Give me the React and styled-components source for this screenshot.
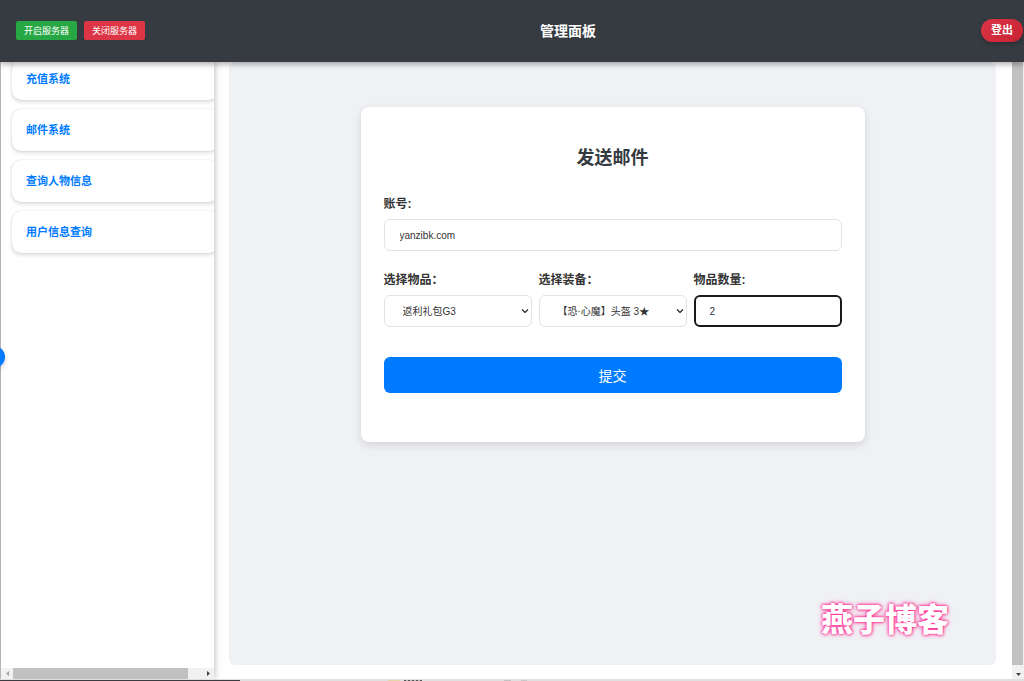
import React, { useState } from "react";
import styled, { createGlobalStyle } from "styled-components";

const GlobalStyle = createGlobalStyle`
  *, *::before, *::after { box-sizing: border-box; }
  body {
    margin: 0;
    background: #fff;
    color: #333;
    font-family: "Liberation Sans", "Noto Sans CJK SC", sans-serif;
  }
  button, input, select { font-family: inherit; }
`;

const Page = styled.div`
  position: relative;
  display: flex;
  flex-direction: column;
  min-height: 100vh;
  overflow: hidden;
`;

const Header = styled.header`
  position: relative;
  z-index: 2;
  display: flex;
  align-items: center;
  justify-content: space-between;
  height: 62px;
  padding: 0 1px 1px 16px;
  background: #363a41;
  box-shadow: 0 2px 6px rgba(0, 0, 0, 0.35);
`;

const ServerActions = styled.div`
  display: flex;
  gap: 7px;
  margin-right: 10px;
`;

const ServerButton = styled.button`
  height: 19px;
  padding: 0 8px;
  border: 0;
  border-radius: 2px;
  background: ${(p) => (p.$tone === "start" ? "#28a745" : "#dc3545")};
  color: #fff;
  font-size: 9px;
  line-height: 20px;
`;

const HeaderTitle = styled.h1`
  margin: 0;
  color: #fff;
  font-size: 14px;
  line-height: 20px;
`;

const LogoutButton = styled.button`
  height: 23px;
  padding: 0 10px;
  border: 0;
  border-radius: 12px;
  background: linear-gradient(135deg, #dc3545, #c82333);
  box-shadow: 0 2px 4px rgba(0, 0, 0, 0.2);
  color: #fff;
  font-size: 11px;
  font-weight: 700;
  line-height: 23px;
`;

const Body = styled.div`
  display: flex;
  flex: 1;
  overflow: hidden;
`;

const Sidebar = styled.aside`
  z-index: 1;
  display: flex;
  flex-direction: column;
  flex: none;
  justify-content: space-between;
  width: 214px;
  border-left: 1px solid #b4b4b4;
  background: #fff;
  box-shadow: 1px 0 6px rgba(0, 0, 0, 0.25);
  overflow: hidden;
`;

const Menu = styled.nav`
  display: flex;
  flex-direction: column;
  gap: 9px;
  margin-top: -4px;
  padding-left: 11px;
`;

const MenuLink = styled.a`
  flex: none;
  width: 206px;
  padding: 11px 14px;
  border-radius: 9px;
  background: #fff;
  box-shadow: 0 0 1px rgba(0, 0, 0, 0.25), 0 2px 4px rgba(0, 0, 0, 0.14);
  color: #007bff;
  font-size: 11px;
  font-weight: 700;
  line-height: 20px;
  text-decoration: none;
`;

const HorizontalBar = styled.div`
  display: flex;
  align-items: center;
  height: 11px;
  background: #f1f1f1;
`;

const HorizontalThumb = styled.div`
  width: 175px;
  height: 11px;
  background: #c1c1c1;
`;

const VerticalBar = styled.div`
  display: flex;
  flex-direction: column;
  flex: none;
  width: 12px;
  background: #f1f1f1;
`;

const VerticalThumb = styled.div`
  flex: 1;
  width: 11px;
  background: #c1c1c1;
`;

const ArrowBox = styled.span`
  display: flex;
  align-items: center;
  justify-content: center;
  width: 12px;
  height: ${(p) => p.$height}px;
  margin-left: ${(p) => (p.$end ? "auto" : "0")};
`;

const Main = styled.main`
  display: flex;
  flex: 1;
  min-width: 0;
  padding: 0 16px 14px 15px;
`;

const Panel = styled.section`
  flex: 1;
  padding: 45px 16px 16px;
  border-radius: 6px;
  background: #f0f1f5;
`;

const FormCard = styled.form`
  max-width: 504px;
  min-height: 335px;
  margin: 0 auto;
  padding: 36px 23px 49px;
  border-radius: 8px;
  background: #fff;
  box-shadow: 0 3px 8px rgba(0, 0, 0, 0.12);
`;

const FormTitle = styled.h2`
  margin: 0 0 22px;
  color: #343a40;
  font-size: 18px;
  line-height: 30px;
  text-align: center;
`;

const FieldRow = styled.div`
  display: flex;
  gap: 7px;
  margin-bottom: ${(p) => (p.$last ? "30px" : "20px")};
`;

const Field = styled.div`
  display: flex;
  flex: 1;
  flex-direction: column;
  gap: 6px;
  min-width: 0;
`;

const Label = styled.label`
  color: #333;
  font-size: 12px;
  font-weight: 700;
  line-height: 18px;
`;

const TextInput = styled.input`
  width: 100%;
  height: 32px;
  padding: 0 15px;
  border: 1px solid #e2e3e5;
  border-radius: 6px;
  background: #fff;
  color: #333;
  font-size: 10px;
  ${(p) => p.$active && "border: 2px solid #1a1a1e; padding: 0 14px;"}
`;

const SelectBox = styled.div`
  position: relative;

  svg {
    position: absolute;
    top: 13px;
    right: 3px;
    pointer-events: none;
  }
`;

const Select = styled.select`
  display: block;
  width: 100%;
  height: 32px;
  padding: 0 18px;
  appearance: none;
  border: 1px solid #e2e3e5;
  border-radius: 6px;
  background: #fff;
  color: #333;
  font-size: 10px;
`;

const SubmitButton = styled.button`
  width: 100%;
  height: 36px;
  border: 0;
  border-radius: 6px;
  background: #007bff;
  color: #fff;
  font-size: 14px;
  line-height: 36px;
`;

const BottomEdge = styled.div`
  height: 2px;
  border-top: 1px solid #e0e0e0;
  background:
    linear-gradient(#3c3c3e, #3c3c3e) 0 0 / 240px 1px no-repeat,
    linear-gradient(#e3d5a6, #e3d5a6) 388px 0 / 12px 1px no-repeat,
    repeating-linear-gradient(90deg, #555 0 2px, #bbb 2px 4px) 404px 0 / 18px 1px no-repeat,
    linear-gradient(#c2c2c2, #c2c2c2) 504px 0 / 7px 1px no-repeat,
    linear-gradient(#c8c8c8, #c8c8c8) 521px 0 / 6px 1px no-repeat,
    #e0e0e0;
`;

const DrawerToggle = styled.button`
  position: absolute;
  z-index: 3;
  top: 346px;
  left: -17px;
  width: 22px;
  height: 22px;
  padding: 0;
  border: 0;
  border-radius: 50%;
  background: #007bff;
  box-shadow: 0 2px 5px rgba(0, 0, 0, 0.2);
`;

const Watermark = styled.div`
  position: absolute;
  z-index: 3;
  right: 75px;
  bottom: 44px;
  color: #fff;
  font-family: "Noto Sans CJK SC", sans-serif;
  font-size: 32px;
  font-weight: 900;
  line-height: 40px;
  text-shadow: 0 0 2px #ff2f92, 0 0 3px #ff2f92, 0 0 5px #ff4fa3;
  pointer-events: none;
`;

const menuItems = ["充值系统", "邮件系统", "查询人物信息", "用户信息查询"];

function Arrow({ points, color }) {
  return (
    <svg width="7" height="7" viewBox="0 0 7 7" aria-hidden="true">
      <polygon points={points} fill={color} />
    </svg>
  );
}

function Dropdown({ id, value }) {
  return (
    <SelectBox>
      <Select id={id}>
        <option>{value}</option>
      </Select>
      <svg width="8" height="6" viewBox="0 0 8 6" aria-hidden="true">
        <path d="M1 1.5 4 4.5 7 1.5" fill="none" stroke="#222" strokeWidth="1.2" />
      </svg>
    </SelectBox>
  );
}

export default function App() {
  const [account, setAccount] = useState("yanzibk.com");
  const [count, setCount] = useState("2");

  return (
    <Page>
      <GlobalStyle />
      <Header>
        <ServerActions>
          <ServerButton type="button" $tone="start">开启服务器</ServerButton>
          <ServerButton type="button" $tone="stop">关闭服务器</ServerButton>
        </ServerActions>
        <HeaderTitle>管理面板</HeaderTitle>
        <LogoutButton type="button">登出</LogoutButton>
      </Header>

      <Body>
        <Sidebar>
          <Menu>
            {menuItems.map((item) => (
              <MenuLink href="#" key={item}>{item}</MenuLink>
            ))}
          </Menu>
          <HorizontalBar>
            <ArrowBox $height={11}><Arrow points="5,1 5,6 2,3.5" color="#a3a3a3" /></ArrowBox>
            <HorizontalThumb />
            <ArrowBox $height={11} $end><Arrow points="2,1 2,6 5,3.5" color="#404040" /></ArrowBox>
          </HorizontalBar>
        </Sidebar>

        <Main>
          <Panel>
            <FormCard onSubmit={(e) => e.preventDefault()}>
              <FormTitle>发送邮件</FormTitle>
              <FieldRow>
                <Field>
                  <Label htmlFor="account">账号:</Label>
                  <TextInput
                    id="account"
                    value={account}
                    onChange={(e) => setAccount(e.target.value)}
                  />
                </Field>
              </FieldRow>
              <FieldRow $last>
                <Field>
                  <Label htmlFor="item">选择物品：</Label>
                  <Dropdown id="item" value="返利礼包G3" />
                </Field>
                <Field>
                  <Label htmlFor="gear">选择装备：</Label>
                  <Dropdown id="gear" value="【恐·心魔】头盔 3★" />
                </Field>
                <Field>
                  <Label htmlFor="count">物品数量:</Label>
                  <TextInput
                    id="count"
                    $active
                    value={count}
                    onChange={(e) => setCount(e.target.value)}
                  />
                </Field>
              </FieldRow>
              <SubmitButton type="submit">提交</SubmitButton>
            </FormCard>
          </Panel>
        </Main>

        <VerticalBar>
          <VerticalThumb />
          <ArrowBox $height={14}><Arrow points="1,4 6,4 3.5,7" color="#404040" /></ArrowBox>
        </VerticalBar>
      </Body>

      <BottomEdge />
      <DrawerToggle type="button" aria-label="展开" />
      <Watermark>燕子博客</Watermark>
    </Page>
  );
}
